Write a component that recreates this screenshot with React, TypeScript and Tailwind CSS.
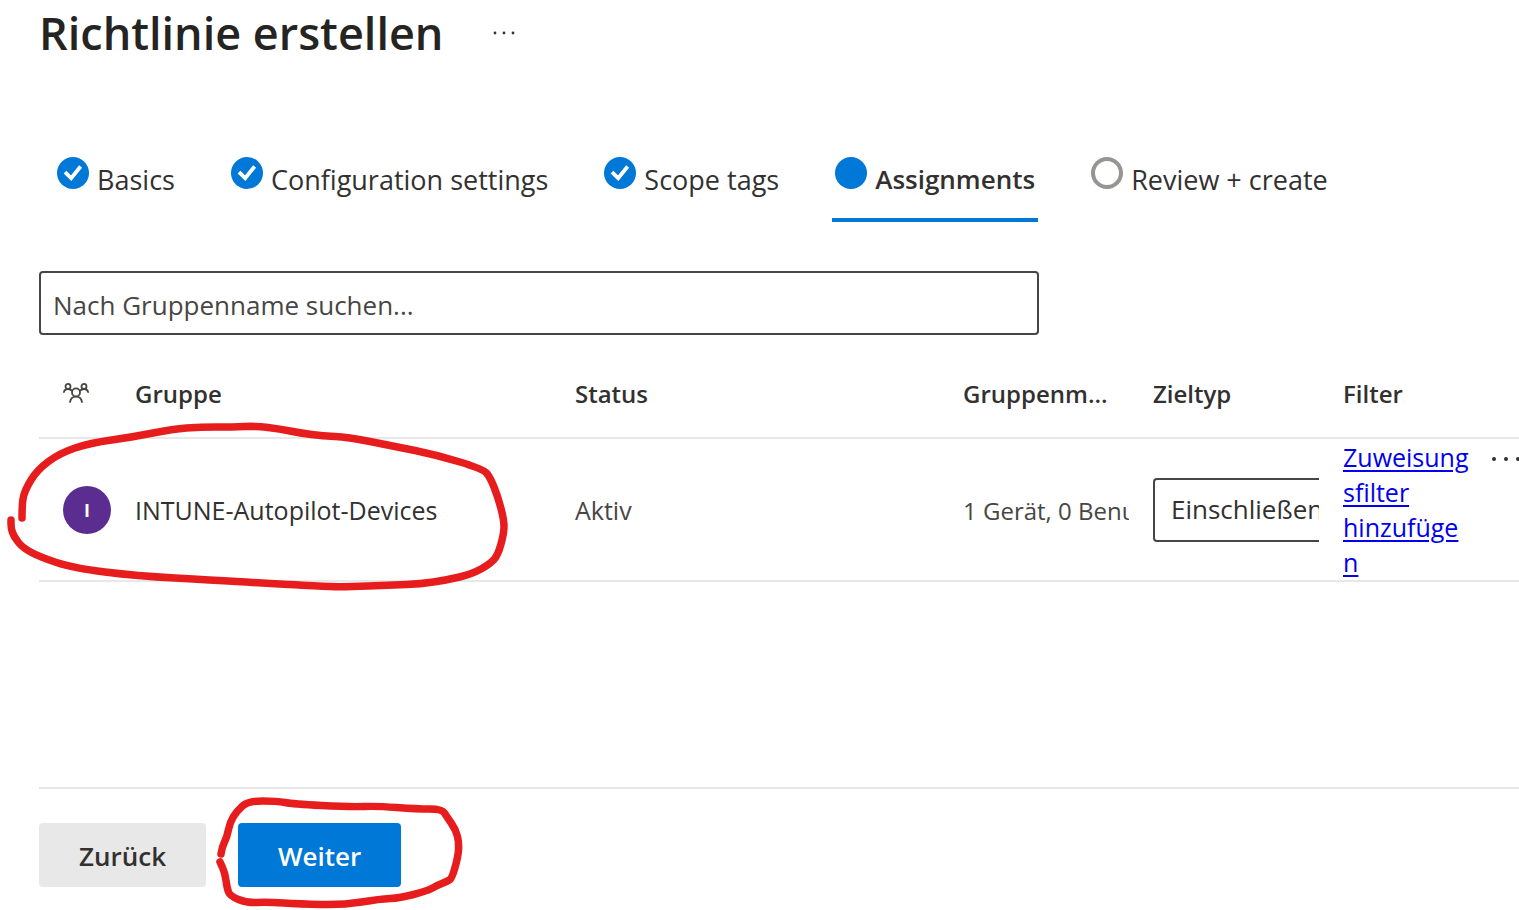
type StepState = "done" | "current" | "open"

interface Step {
  label: string
  state: StepState
}

const steps: Step[] = [
  { label: "Basics", state: "done" },
  { label: "Configuration settings", state: "done" },
  { label: "Scope tags", state: "done" },
  { label: "Assignments", state: "current" },
  { label: "Review + create", state: "open" },
]

function StepIcon({ state }: { state: StepState }) {
  if (state === "open") {
    return <span className="size-8 shrink-0 rounded-full border-4 border-[#979593]" />
  }
  return (
    <span className="flex size-8 shrink-0 items-center justify-center rounded-full bg-[#0078d7] text-white">
      {state === "done" ? (
        <svg viewBox="0 0 32 32" className="size-8" fill="none" stroke="currentColor" strokeWidth={3.8}>
          <path d="M8 15.2 14.2 21.2 23.6 9.5" />
        </svg>
      ) : null}
    </span>
  )
}

function GroupIcon() {
  return (
    <svg viewBox="0 0 26 20" className="h-5 w-[26px]" fill="none" stroke="#484644" strokeWidth={1.8}>
      <circle cx="5" cy="3.4" r="2.5" />
      <circle cx="21" cy="3.4" r="2.5" />
      <circle cx="13" cy="9.4" r="4" />
      <path d="M0.8 9.8C1 7.4 2.6 6 5 6c1.7 0 3.2.6 4.100 2" />
      <path d="M25.2 9.8C25 7.4 23.4 6 21 6c-1.7 0-3.200.6-4.100 2" />
      <path d="M7 19.8C7.300 16 9.600 13.600 13 13.600s5.700 2.400 6 6.200" />
    </svg>
  )
}

// Marker strokes, as points in the coordinates of their own svg
const rowMark: number[][] = [
  [22, 98], [22, 83], [25, 70], [37, 50], [60, 33], [90, 23], [133, 17], [173, 9], [200, 7], [233, 7],
  [256, 6], [280, 9], [300, 13], [323, 16], [347, 17], [393, 26], [437, 35], [483, 49], [490, 57],
  [498, 77], [504, 100], [504, 113], [498, 135], [490, 144], [472, 154], [447, 160], [420, 164],
  [393, 165], [343, 167], [317, 166], [260, 163], [213, 160], [137, 156], [73, 148], [40, 137],
  [23, 128], [14, 117], [11, 108], [11, 100],
]

const buttonMark: number[][] = [
  [11, 59], [12, 52], [17, 42], [20, 27], [27, 16], [38, 6], [67, 6], [83, 9], [140, 12], [167, 11],
  [207, 14], [232, 14], [237, 22], [246, 35], [249, 48], [248, 62], [242, 83], [238, 86], [228, 90],
  [217, 96], [190, 103], [170, 104], [133, 110], [90, 109], [57, 107], [37, 108], [20, 101],
  [17, 93], [15, 78], [10, 67],
]

function smoothPath(points: number[][]) {
  const [first, ...rest] = points
  let d = `M${first[0]} ${first[1]}`
  rest.forEach(([x, y], i) => {
    const next = rest[i + 1]
    d += next ? `Q${x} ${y} ${(x + next[0]) / 2} ${(y + next[1]) / 2}` : `L${x} ${y}`
  })
  return d
}

function Mark({ points, className }: { points: number[][]; className: string }) {
  return (
    <svg
      aria-hidden="true"
      className={`pointer-events-none absolute max-w-none overflow-visible ${className}`}
      fill="none"
      stroke="#e71d1d"
      strokeWidth={7.5}
      strokeLinecap="round"
      strokeLinejoin="round"
    >
      <path d={smoothPath(points)} />
    </svg>
  )
}

function AssignmentsTable() {
  return (
    <div className="relative mt-4">
      <table className="w-full table-fixed border-collapse text-left text-[25px] leading-[35px] text-[#323130]">
        <colgroup>
          <col className="w-[84px]" />
          <col className="w-[440px]" />
          <col className="w-[388px]" />
          <col className="w-[190px]" />
          <col className="w-[190px]" />
          <col className="w-[149px]" />
          <col />
        </colgroup>
        <thead>
          <tr className="h-[87px] border-b-2 border-[#e8e8e8] text-2xl">
            <th className="pb-0.5 pl-6" aria-label="Gruppentyp">
              <GroupIcon />
            </th>
            <th className="px-3 font-semibold">Gruppe</th>
            <th className="px-3 font-semibold">Status</th>
            <th className="px-3 font-semibold">Gruppenm...</th>
            <th className="px-3 font-semibold">Zieltyp</th>
            <th className="px-3 font-semibold">Filter</th>
            <th />
          </tr>
        </thead>
        <tbody>
          <tr className="border-b-2 border-[#e8e8e8]">
            <td className="pl-6">
              <span className="flex size-12 items-center justify-center rounded-full bg-[#5c2d91] text-lg font-bold text-white">
                I
              </span>
            </td>
            <td className="px-3 pt-0.5">INTUNE-Autopilot-Devices</td>
            <td className="px-3 pt-0.5 text-[#484644]">Aktiv</td>
            <td className="px-3 pt-0.5 text-2xl text-[#484644]">
              <div className="overflow-hidden whitespace-nowrap">1 Gerät, 0 Benu</div>
            </td>
            <td className="px-3">
              <div className="overflow-hidden">
                <select
                  aria-label="Zieltyp"
                  className="block h-16 w-60 appearance-none rounded border-2 border-[#484644] bg-white pl-4 text-[26px]"
                >
                  <option>Einschließen</option>
                  <option>Ausschließen</option>
                </select>
              </div>
            </td>
            <td className="pt-px pr-2 pl-3 align-top">
              <a href="#" className="wrap-break-word text-[#0000ee] underline decoration-2 underline-offset-3">
                Zuweisungsfilter hinzufügen
              </a>
            </td>
            <td className="overflow-hidden pl-3 align-top">
              <button type="button" aria-label="Weitere Aktionen" className="flex h-10 items-center">
                <svg viewBox="0 0 30 6" className="h-1.5 w-[30px]" fill="#323130">
                  <circle cx="2" cy="3" r="2" />
                  <circle cx="14" cy="3" r="2" />
                  <circle cx="26" cy="3" r="2" />
                </svg>
              </button>
            </td>
          </tr>
        </tbody>
      </table>
      <Mark points={rowMark} className="-left-[39px] top-[69px] h-44 w-[510px]" />
    </div>
  )
}

export default function App() {
  return (
    <div className="flex min-h-screen flex-col overflow-hidden bg-white pl-[39px] font-['Open_Sans','Noto_Sans',sans-serif] text-[#323130]">
      <header className="flex items-center gap-[50px]">
        <h1 className="text-[45px] leading-[66px] font-semibold text-[#252423]">Richtlinie erstellen</h1>
        <button type="button" aria-label="Mehr">
          <svg viewBox="0 0 22 4" className="h-1 w-[22px]" fill="#323130">
            <circle cx="2" cy="2" r="1.4" />
            <circle cx="11" cy="2" r="1.4" />
            <circle cx="20" cy="2" r="1.4" />
          </svg>
        </button>
      </header>

      <nav className="mt-[91px] ml-[15px] flex gap-[50px]">
        {steps.map((step) => (
          <button
            key={step.label}
            type="button"
            aria-current={step.state === "current" ? "step" : undefined}
            className={`flex h-[65px] items-start gap-2 border-b-4 px-[3px] leading-[45px] whitespace-nowrap ${
              step.state === "current"
                ? "border-[#0078d7] text-[26px] font-semibold"
                : "border-transparent text-[27px]"
            }`}
          >
            <StepIcon state={step.state} />
            {step.label}
          </button>
        ))}
      </nav>

      <main className="flex-1 pt-[49px]">
        <input
          type="text"
          aria-label="Nach Gruppenname suchen"
          placeholder="Nach Gruppenname suchen..."
          className="block h-16 w-[1000px] max-w-full rounded border-2 border-[#484644] px-3 pt-1 text-[26px] placeholder:text-[#484644]"
        />
        <AssignmentsTable />
      </main>

      <footer className="flex gap-8 border-t-2 border-[#e8e8e8] pt-[34px] pb-[23px] text-[26px] font-semibold">
        <button type="button" className="h-16 rounded bg-[#e8e8e8] px-10 pt-0.5">
          Zurück
        </button>
        <div className="relative">
          <button type="button" className="h-16 rounded bg-[#0078d7] px-10 pt-0.5 text-white">
            Weiter
          </button>
          <Mark points={buttonMark} className="-top-7 -left-7 h-28 w-64" />
        </div>
      </footer>
    </div>
  )
}
